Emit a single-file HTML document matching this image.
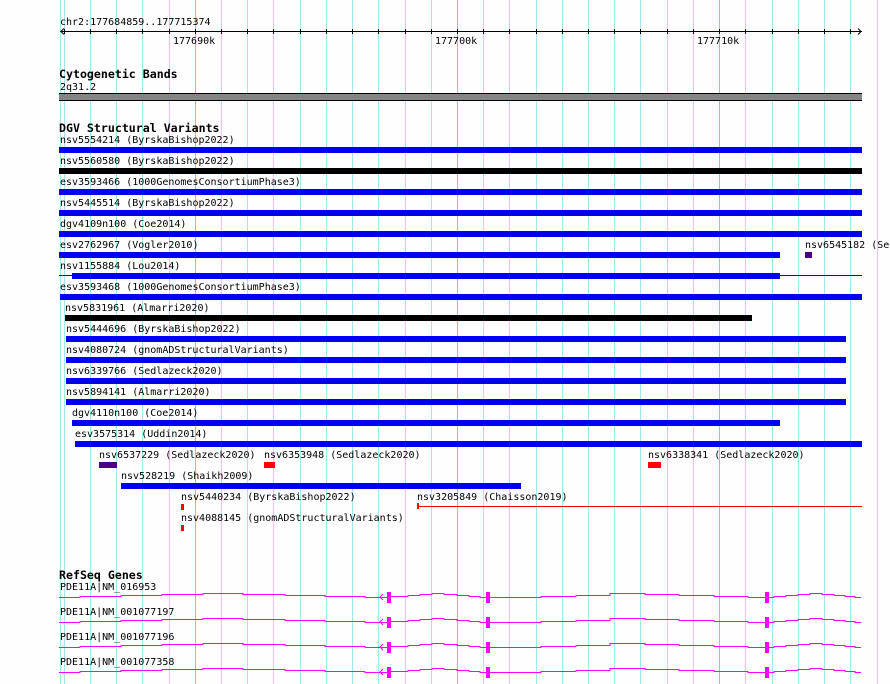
<!DOCTYPE html>
<html><head><meta charset="utf-8"><style>
html,body{margin:0;padding:0;background:#fff;}
svg{display:block;}
text{font-family:"DejaVu Sans Mono","Liberation Mono",monospace;font-size:10px;fill:#000;}
.t{font-weight:bold;font-size:11.6px;}
</style></head><body>
<svg width="890" height="684" viewBox="0 0 890 684" xmlns="http://www.w3.org/2000/svg">
<rect width="890" height="684" fill="#fdfefd"/>
<g stroke="#a8e6ee" stroke-width="1" shape-rendering="crispEdges">
<line x1="60.5" y1="0" x2="60.5" y2="684"/>
<line x1="64.5" y1="0" x2="64.5" y2="684"/><line x1="90.5" y1="0" x2="90.5" y2="684"/><line x1="116.5" y1="0" x2="116.5" y2="684"/><line x1="142.5" y1="0" x2="142.5" y2="684"/><line x1="169.5" y1="0" x2="169.5" y2="684"/>
<line x1="221.5" y1="0" x2="221.5" y2="684"/><line x1="247.5" y1="0" x2="247.5" y2="684"/><line x1="273.5" y1="0" x2="273.5" y2="684"/><line x1="300.5" y1="0" x2="300.5" y2="684"/><line x1="326.5" y1="0" x2="326.5" y2="684"/><line x1="352.5" y1="0" x2="352.5" y2="684"/><line x1="378.5" y1="0" x2="378.5" y2="684"/><line x1="405.5" y1="0" x2="405.5" y2="684"/><line x1="431.5" y1="0" x2="431.5" y2="684"/>
<line x1="483.5" y1="0" x2="483.5" y2="684"/><line x1="509.5" y1="0" x2="509.5" y2="684"/><line x1="536.5" y1="0" x2="536.5" y2="684"/><line x1="562.5" y1="0" x2="562.5" y2="684"/><line x1="588.5" y1="0" x2="588.5" y2="684"/><line x1="614.5" y1="0" x2="614.5" y2="684"/><line x1="640.5" y1="0" x2="640.5" y2="684"/><line x1="667.5" y1="0" x2="667.5" y2="684"/><line x1="693.5" y1="0" x2="693.5" y2="684"/>
<line x1="745.5" y1="0" x2="745.5" y2="684"/><line x1="772.5" y1="0" x2="772.5" y2="684"/><line x1="798.5" y1="0" x2="798.5" y2="684"/><line x1="824.5" y1="0" x2="824.5" y2="684"/><line x1="850.5" y1="0" x2="850.5" y2="684"/><line x1="877.5" y1="0" x2="877.5" y2="684"/>
</g>
<g stroke="#8cc4e4" stroke-width="1" shape-rendering="crispEdges">
<line x1="195.5" y1="0" x2="195.5" y2="684"/><line x1="457.5" y1="0" x2="457.5" y2="684"/><line x1="719.5" y1="0" x2="719.5" y2="684"/>
</g>
<!-- ruler -->
<text x="60" y="25">chr2:177684859..177715374</text>
<g stroke="#000" stroke-width="1" fill="none" shape-rendering="crispEdges">
<line x1="60" y1="31.5" x2="862" y2="31.5"/>
<path d="M64.5 29v5M90.5 29v5M116.5 29v5M142.5 29v5M169.5 29v5M195.5 29v5M221.5 29v5M247.5 29v5M273.5 29v5M300.5 29v5M326.5 29v5M352.5 29v5M378.5 29v5M405.5 29v5M431.5 29v5M457.5 29v5M483.5 29v5M509.5 29v5M536.5 29v5M562.5 29v5M588.5 29v5M614.5 29v5M640.5 29v5M667.5 29v5M693.5 29v5M719.5 29v5M745.5 29v5M772.5 29v5M798.5 29v5M824.5 29v5M850.5 29v5"/>
</g>
<path d="M64 28.5L61 31.5L64 34.5M858 28.5L861 31.5L858 34.5" stroke="#000" fill="none"/>
<text x="173" y="44">177690k</text>
<text x="435" y="44">177700k</text>
<text x="697" y="44">177710k</text>
<!-- cytobands -->
<text class="t" x="59" y="78">Cytogenetic Bands</text>
<text x="60" y="90">2q31.2</text>
<rect x="59" y="93" width="803" height="8" fill="#000"/>
<rect x="59" y="94" width="803" height="6" fill="#858585"/>
<!-- DGV -->
<text class="t" x="59" y="132">DGV Structural Variants</text>
<g fill="#0000f0">
<text x="60" y="143">nsv5554214 (ByrskaBishop2022)</text><rect x="59" y="147" width="803" height="6"/>
<text x="60" y="164">nsv5560580 (ByrskaBishop2022)</text><rect x="59" y="168" width="803" height="6" fill="#000"/>
<text x="60" y="185">esv3593466 (1000GenomesConsortiumPhase3)</text><rect x="59" y="189" width="803" height="6"/>
<text x="60" y="206">nsv5445514 (ByrskaBishop2022)</text><rect x="59" y="210" width="803" height="6"/>
<text x="60" y="227">dgv4109n100 (Coe2014)</text><rect x="59" y="231" width="803" height="6"/>
<text x="60" y="248">esv2762967 (Vogler2010)</text><rect x="59" y="252" width="721" height="6"/>
<text x="805" y="248">nsv6545182 (Sedlazeck2020)</text><rect x="805" y="252" width="7" height="6" fill="#4b0082"/>
<text x="60" y="269">nsv1155884 (Lou2014)</text><rect x="59" y="275" width="803" height="1"/><rect x="72" y="273" width="708" height="6"/>
<text x="60" y="290">esv3593468 (1000GenomesConsortiumPhase3)</text><rect x="60" y="294" width="802" height="6"/>
<text x="65" y="311">nsv5831961 (Almarri2020)</text><rect x="65" y="315" width="687" height="6" fill="#000"/>
<text x="66" y="332">nsv5444696 (ByrskaBishop2022)</text><rect x="66" y="336" width="780" height="6"/>
<text x="66" y="353">nsv4080724 (gnomADStructuralVariants)</text><rect x="66" y="357" width="780" height="6"/>
<text x="66" y="374">nsv6339766 (Sedlazeck2020)</text><rect x="66" y="378" width="780" height="6"/>
<text x="66" y="395">nsv5894141 (Almarri2020)</text><rect x="66" y="399" width="780" height="6"/>
<text x="72" y="416">dgv4110n100 (Coe2014)</text><rect x="72" y="420" width="708" height="6"/>
<text x="75" y="437">esv3575314 (Uddin2014)</text><rect x="75" y="441" width="787" height="6"/>
<text x="99" y="458">nsv6537229 (Sedlazeck2020)</text><rect x="99" y="462" width="18" height="6" fill="#4b0082"/>
<text x="264" y="458">nsv6353948 (Sedlazeck2020)</text><rect x="264" y="462" width="11" height="6" fill="#f00"/>
<text x="648" y="458">nsv6338341 (Sedlazeck2020)</text><rect x="648" y="462" width="13" height="6" fill="#f00"/>
<text x="121" y="479">nsv528219 (Shaikh2009)</text><rect x="121" y="483" width="400" height="6"/>
<text x="181" y="500">nsv5440234 (ByrskaBishop2022)</text><rect x="181" y="504" width="3" height="6" fill="#f00"/>
<text x="417" y="500">nsv3205849 (Chaisson2019)</text><rect x="417" y="506" width="445" height="1" fill="#f00"/><rect x="417" y="503" width="2" height="6" fill="#f00"/>
<text x="181" y="521">nsv4088145 (gnomADStructuralVariants)</text><rect x="181" y="525" width="3" height="6" fill="#f00"/>
</g>
<!-- RefSeq -->
<text class="t" x="59" y="579">RefSeq Genes</text>
<defs>
<g id="gene">
<polyline fill="none" stroke="#ff00ff" stroke-width="1" shape-rendering="crispEdges" points="59,0.5 80,0.5 80,-0.5 121,-0.5 121,-1.5 162,-1.5 162,-2.5 203,-2.5 203,-3.5 243,-3.5 243,-2.5 285,-2.5 285,-1.5 325,-1.5 325,-0.5 365,-0.5 365,0.5 388,0.5 388,-0.5 408,-0.5 408,-1.5 420,-1.5 420,-2.5 432,-2.5 432,-3.5 444,-3.5 444,-2.5 457,-2.5 457,-1.5 469,-1.5 469,-0.5 480,-0.5 480,0.5 541,0.5 541,-0.5 576,-0.5 576,-1.5 610,-1.5 610,-3.5 645,-3.5 645,-2.5 679,-2.5 679,-1.5 714,-1.5 714,-0.5 748,-0.5 748,0.5 774,0.5 774,-0.5 786,-0.5 786,-1.5 798,-1.5 798,-2.5 810,-2.5 810,-3.5 822,-3.5 822,-2.5 834,-2.5 834,-1.5 845,-1.5 845,-0.5 855,-0.5 855,0.5 861,0.5"/>
<path d="M383 -3L380 0L383 3" stroke="#ff00ff" fill="none" stroke-width="1"/>
<rect x="387" y="-5" width="4" height="11" fill="#ff00ff"/>
<rect x="486" y="-5" width="4" height="11" fill="#ff00ff"/>
<rect x="765" y="-5" width="4" height="11" fill="#ff00ff"/>
</g>
</defs>
<text x="60" y="590">PDE11A|NM_016953</text><use href="#gene" transform="translate(0,597)"/>
<text x="60" y="615">PDE11A|NM_001077197</text><use href="#gene" transform="translate(0,622)"/>
<text x="60" y="640">PDE11A|NM_001077196</text><use href="#gene" transform="translate(0,647)"/>
<text x="60" y="665">PDE11A|NM_001077358</text><use href="#gene" transform="translate(0,672)"/>
</svg>
</body></html>
